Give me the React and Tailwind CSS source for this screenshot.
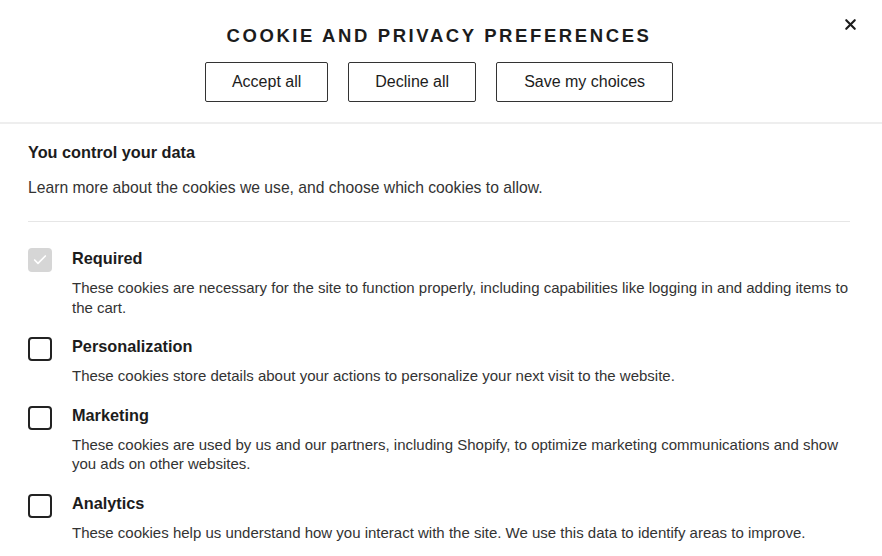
import { X, Check } from 'lucide-react'

const categories = [
  {
    name: 'Required',
    text: 'These cookies are necessary for the site to function properly, including capabilities like logging in and adding items to the cart.',
    locked: true,
  },
  {
    name: 'Personalization',
    text: 'These cookies store details about your actions to personalize your next visit to the website.',
  },
  {
    name: 'Marketing',
    text: 'These cookies are used by us and our partners, including Shopify, to optimize marketing communications and show you ads on other websites.',
  },
  {
    name: 'Analytics',
    text: 'These cookies help us understand how you interact with the site. We use this data to identify areas to improve.',
  },
]

const App = () => {
  return (
    <div className="min-h-screen bg-white text-[#1c1c1c] font-['Liberation_Sans',Arial,sans-serif]">
      {/* Header */}
      <div className="relative border-b-2 border-[#eeeeee] pt-[22px] pb-[20px] flex flex-col items-center">
        <h1 className="text-[18.5px] leading-[26px] font-bold tracking-[2.6px] uppercase mr-[4px] mt-[1px]">
          Cookie and privacy preferences
        </h1>
        <div className="flex gap-5 mt-[13px] mr-[4px]">
          <button className="h-10 px-[26px] border border-[#333] rounded-[2px] text-[16px]">Accept all</button>
          <button className="h-10 px-[26px] border border-[#333] rounded-[2px] text-[16px]">Decline all</button>
          <button className="h-10 px-[27px] border border-[#333] rounded-[2px] text-[16px]">Save my choices</button>
        </div>
        <button className="absolute top-[16px] right-[23px] text-[#1c1c1c]">
          <X className="w-[17px] h-[17px]" strokeWidth={3} />
        </button>
      </div>

      {/* Body */}
      <div className="pl-[28px] pr-[32px] pt-[17px]">
        <h2 className="text-[16.3px] leading-[22px] font-bold">You control your data</h2>
        <p className="text-[15.7px] leading-[22px] text-[#333] mt-[14px]">
          Learn more about the cookies we use, and choose which cookies to allow.
        </p>
        <div className="border-t border-[#e6e6e6] mt-[22px]" />

        <div className="flex flex-col gap-[17px] pt-[24px]">
          {categories.map((c) => (
            <div key={c.name} className="flex gap-5">
              {c.locked ? (
                <div className="w-6 h-6 mt-[2px] shrink-0 rounded-[4px] bg-[#d6d6d6] flex items-center justify-center">
                  <Check className="w-4 h-4 text-white" strokeWidth={2.5} />
                </div>
              ) : (
                <div className="w-6 h-6 mt-[3px] shrink-0 rounded-[4px] border-2 border-[#222]" />
              )}
              <div className="flex-1">
                <h3 className="text-[16.3px] leading-6 font-bold">{c.name}</h3>
                <p className="text-[15px] leading-[19.5px] text-[#333] mt-[8px]">{c.text}</p>
              </div>
            </div>
          ))}
        </div>
      </div>
    </div>
  )
}

export default App
